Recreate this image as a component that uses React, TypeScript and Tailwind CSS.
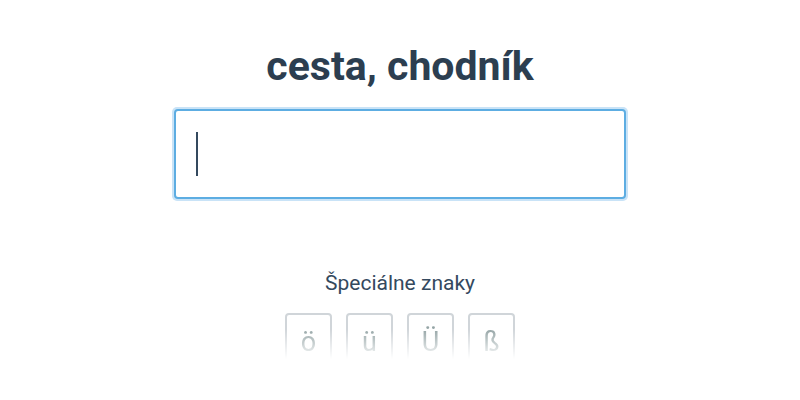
import React from "react";

export default function App() {
  const chars = ["ö", "ü", "Ü", "ß"];
  return (
    <div className="w-[800px] h-[400px] bg-white flex flex-col items-center overflow-hidden" style={{ fontFamily: "Roboto, 'Liberation Sans', sans-serif" }}>
      <h1 className="mt-[40px] text-[41px] leading-[52px] font-bold text-[#2c3e50]">cesta, chodník</h1>
      <div className="mt-[15px] w-[456px] h-[94px] rounded-[5px] p-[2px] bg-[#c9e3f7]">
        <div className="w-full h-full rounded-[4px] border-2 border-[#5dade2] bg-white flex items-center pl-[20px]">
          <div className="w-[2px] h-[44px] bg-[#34495e]" />
        </div>
      </div>
      <div className="mt-[68px] text-[21px] leading-[28px] text-[#34495e]">Špeciálne znaky</div>
      <div
        className="mt-[16px] flex gap-[14px] h-[46px] overflow-hidden"
        style={{ WebkitMaskImage: "linear-gradient(to bottom, black 35%, transparent 100%)", maskImage: "linear-gradient(to bottom, black 35%, transparent 100%)" }}
      >
        {chars.map((c) => (
          <div key={c} className="w-[47px] h-[60px] border-2 border-[#d0d5d9] rounded-[4px] flex items-start justify-center pt-[11px] text-[27px] leading-[32px] text-[#95a5a6]">
            {c}
          </div>
        ))}
      </div>
    </div>
  );
}
